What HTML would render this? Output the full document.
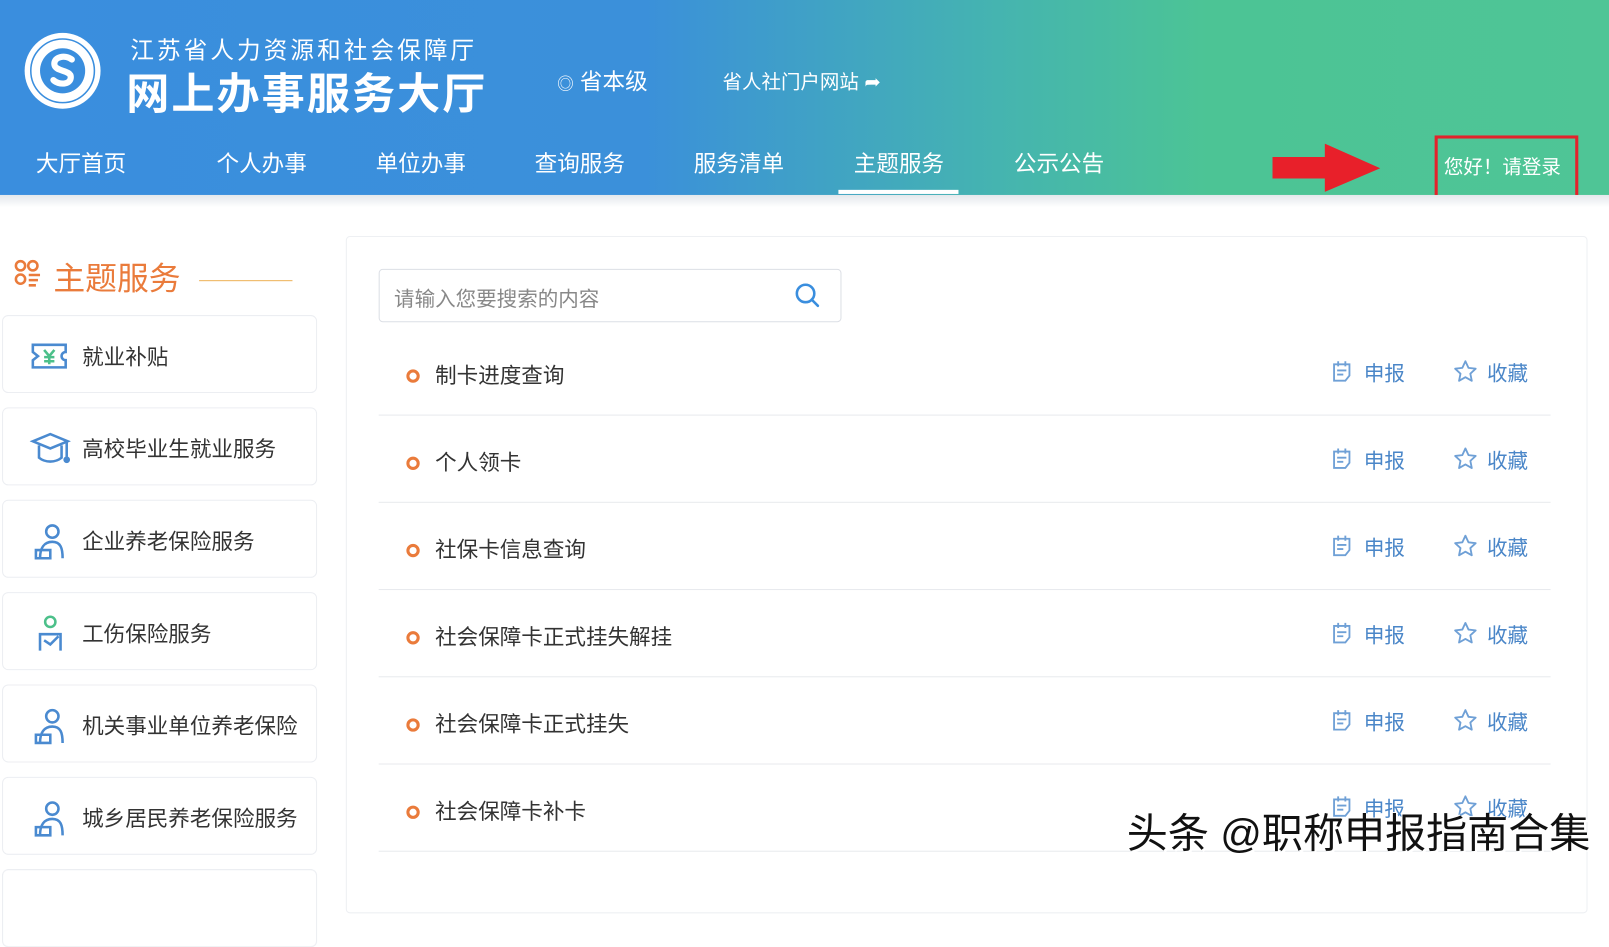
<!DOCTYPE html>
<html><head><meta charset="utf-8"><style>
*{margin:0;padding:0;box-sizing:border-box}
body{width:1609px;height:874px;overflow:hidden;background:#fff;font-family:"Liberation Sans","Noto Sans CJK SC",sans-serif;position:relative}
#w{position:absolute;left:0;top:0;width:1568px;height:852px;transform:scale(1.0262);transform-origin:0 0}
.hdr{position:absolute;left:0;top:0;width:1568px;height:190px;background:linear-gradient(90deg,#3a8ede 0%,#3b90da 40%,#45b4b0 62%,#4cc495 75%,#4fc596 100%)}
.hdr:after{content:"";position:absolute;left:0;top:190px;width:100%;height:12px;background:linear-gradient(#e4e8ec,#fff)}
.t{position:absolute;white-space:nowrap}
.nav{position:absolute;top:142px;color:#fff;font-size:22px}
.card{position:absolute;left:2px;width:307px;height:76px;border:1px solid #eceef2;border-radius:6px;background:#fff}
.card span{position:absolute;left:77px;top:24px;font-size:21px;color:#333}
.card svg{position:absolute;left:26px;top:20px}
.row{position:absolute;left:369px;width:1142px;height:85px;border-bottom:1px solid #e8eaee}
.row .dot{position:absolute;left:27px;top:40px;width:13px;height:13px;border:3px solid #ea7b3b;border-radius:50%}
.row .tx{position:absolute;left:55px;top:30px;font-size:21px;color:#333}
</style></head><body><div id="w">
<div class="hdr">
 <svg class="t" style="left:22px;top:30px" width="78" height="78" viewBox="0 0 78 78"><circle cx="39" cy="39" r="37" fill="#fff"/><circle cx="39" cy="39" r="31" fill="none" stroke="#3a8ede" stroke-width="1.5"/><circle cx="39" cy="39" r="22" fill="#3a8ede"/><path d="M48 28c-6-5-18-3-17 5 1 7 16 5 16 12 0 8-12 8-17 3" stroke="#fff" stroke-width="6" fill="none" stroke-linecap="round"/></svg>
 <div class="t" style="left:127px;top:30px;color:#fff;font-size:23px;letter-spacing:3px">江苏省人力资源和社会保障厅</div>
 <div class="t" style="left:123px;top:58px;color:#fff;font-size:42px;font-weight:bold;letter-spacing:2px">网上办事服务大厅</div>
 <div class="t" style="left:543px;top:62px;color:#fff;font-size:22px"><span style="font-size:16px">◎</span> 省本级</div>
 <div class="t" style="left:704px;top:65px;color:#fff;font-size:19px">省人社门户网站 ➦</div>
 <div class="nav" style="left:35px">大厅首页</div>
 <div class="nav" style="left:211px">个人办事</div>
 <div class="nav" style="left:366px">单位办事</div>
 <div class="nav" style="left:521px">查询服务</div>
 <div class="nav" style="left:676px">服务清单</div>
 <div class="nav" style="left:832px">主题服务</div>
 <div class="t" style="left:817px;top:185px;width:117px;height:4px;background:#fff"></div>
 <div class="nav" style="left:988px">公示公告</div>
 <svg class="t" style="left:1240px;top:140px" width="106" height="48"><polygon points="0,13 51,13 51,0 105,24 51,47 51,34 0,34" fill="#e8202a"/></svg>
 <div class="t" style="left:1398px;top:132px;width:140px;height:65px;border:3px solid #e3222b"></div>
 <div class="t" style="left:1407px;top:148px;color:#fff;font-size:19px">您好！请登录</div>
</div>

<svg class="t" style="left:13px;top:252px" width="28" height="28" viewBox="0 0 28 28" fill="none" stroke="#ea7b3b" stroke-width="2.5"><circle cx="7" cy="7" r="4.5"/><circle cx="19" cy="7" r="4.5"/><circle cx="7" cy="20" r="4.5"/><path d="M15 16h11M15 21h9M15 26h7"/></svg>
<div class="t" style="left:52px;top:246px;color:#ea7b3b;font-size:31px">主题服务</div>
<div class="t" style="left:194px;top:273px;width:91px;height:1px;background:#eeb25a"></div>

<div class="card" style="top:307px"><svg width="38" height="38" viewBox="0 0 38 38" fill="none" stroke="#4a8ad0" stroke-width="2.5"><path d="M3 8h32v7a4 4 0 0 0 0 8v7H3v-7l5-4-5-4z"/><path d="M14 13l5 6 5-6M19 19v8M14 20h10M14 24h10" stroke="#4cc08a"/></svg><span>就业补贴</span></div>
<div class="card" style="top:397px"><svg width="40" height="40" viewBox="0 0 40 40" fill="none" stroke="#4a8ad0" stroke-width="2.5"><path d="M3 12l17-7 17 7-17 7z"/><path d="M9 16v12c6 5 16 5 22 0V16M36 13v14"/><circle cx="36" cy="30" r="2" fill="#4a8ad0"/></svg><span>高校毕业生就业服务</span></div>
<div class="card" style="top:487px"><svg width="40" height="40" viewBox="0 0 40 40" fill="none" stroke="#4a8ad0" stroke-width="2.5"><circle cx="22" cy="10" r="6"/><path d="M10 36c0-10 4-16 12-16s10 6 10 16M6 28h14v8H6z"/></svg><span>企业养老保险服务</span></div>
<div class="card" style="top:577px"><svg width="40" height="40" viewBox="0 0 40 40" fill="none" stroke="#4a8ad0" stroke-width="2.5"><circle cx="20" cy="8" r="5" stroke="#4cc08a"/><path d="M10 36V20h20v16M14 26l6 4 8-8"/></svg><span>工伤保险服务</span></div>
<div class="card" style="top:667px"><svg width="40" height="40" viewBox="0 0 40 40" fill="none" stroke="#4a8ad0" stroke-width="2.5"><circle cx="22" cy="10" r="6"/><path d="M10 36c0-10 4-16 12-16s10 6 10 16M6 28h14v8H6z"/></svg><span>机关事业单位养老保险</span></div>
<div class="card" style="top:757px"><svg width="40" height="40" viewBox="0 0 40 40" fill="none" stroke="#4a8ad0" stroke-width="2.5"><circle cx="22" cy="10" r="6"/><path d="M10 36c0-10 4-16 12-16s10 6 10 16M6 28h14v8H6z"/></svg><span>城乡居民养老保险服务</span></div>
<div class="card" style="top:847px"></div>

<div class="t" style="left:337px;top:230px;width:1210px;height:660px;border:1px solid #eef0f3;border-radius:4px"></div>
<div class="t" style="left:369px;top:262px;width:451px;height:52px;border:1px solid #dcdfe5;border-radius:4px"></div>
<div class="t" style="left:384px;top:275px;color:#888;font-size:20px">请输入您要搜索的内容</div>
<svg class="t" style="left:774px;top:275px" width="26" height="26" viewBox="0 0 26 26" fill="none" stroke="#3a8ede" stroke-width="2.5"><circle cx="11" cy="11" r="8.5"/><path d="M17 17l6 6" stroke-linecap="round"/></svg>

<div class="row" style="top:320px"><div class="dot"></div><div class="tx">制卡进度查询</div></div>
<div class="row" style="top:405px"><div class="dot"></div><div class="tx">个人领卡</div></div>
<div class="row" style="top:490px"><div class="dot"></div><div class="tx">社保卡信息查询</div></div>
<div class="row" style="top:575px"><div class="dot"></div><div class="tx">社会保障卡正式挂失解挂</div></div>
<div class="row" style="top:660px"><div class="dot"></div><div class="tx">社会保障卡正式挂失</div></div>
<div class="row" style="top:745px"><div class="dot"></div><div class="tx">社会保障卡补卡</div></div>

<div id="acts"></div>
<div class="t" style="left:1098px;top:780px;font-size:40px;color:#111;text-shadow:2px 2px 0 #fff,-1px -1px 0 #fff">头条 @职称申报指南合集</div>
</div>
<script>
var h='';[350,435,520,605,690,774].forEach(function(y){
h+='<svg class="t" style="left:1297px;top:'+(y+1)+'px" width="22" height="22" viewBox="0 0 22 22" fill="none" stroke="#6fa0d6" stroke-width="1.8"><path d="M3 4h15v11l-4 5H3zM7 1v5M14 1v5M6 10h9M6 14h6"/></svg>';
h+='<div class="t" style="left:1329px;top:'+(y-2)+'px;font-size:20px;color:#4a86c8">申报</div>';
h+='<svg class="t" style="left:1416px;top:'+y+'px" width="24" height="24" viewBox="0 0 24 24" fill="none" stroke="#6fa0d6" stroke-width="1.8" stroke-linejoin="round"><path d="M12 2l3 6.5 7 .8-5.2 4.8 1.4 7L12 17.6 5.8 21.1l1.4-7L2 9.3l7-.8z"/></svg>';
h+='<div class="t" style="left:1449px;top:'+(y-2)+'px;font-size:20px;color:#4a86c8">收藏</div>';});
document.getElementById('acts').innerHTML=h;
</script>
</body></html>
